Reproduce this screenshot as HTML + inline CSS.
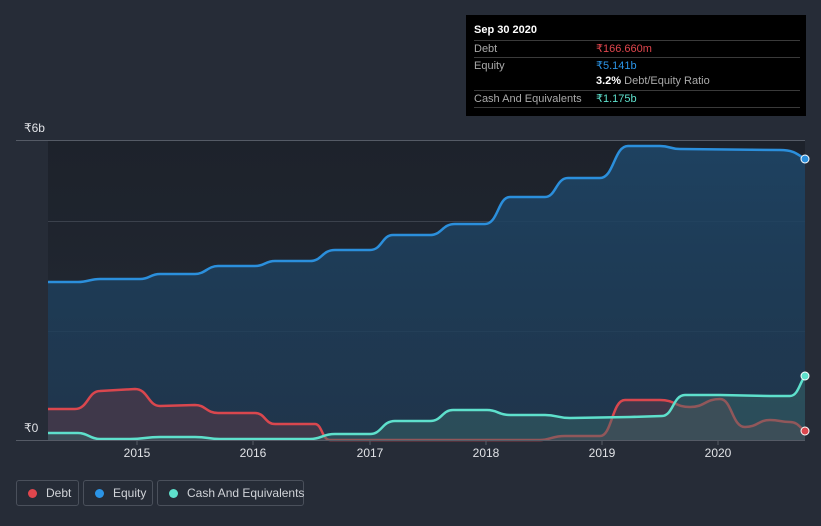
<!DOCTYPE html>
<html><head><style>
html,body{margin:0;width:821px;height:526px;overflow:hidden}
body{background:#262c37;font-family:"Liberation Sans",sans-serif;position:relative}
.tt{position:absolute;left:466px;top:15px;width:340px;height:101px;background:#000;color:#fff;font-size:11px}
.row{position:absolute;left:8px;width:326px;border-top:1px solid #3a3a3a;height:16px;line-height:16px;color:#aaa}
.lg{position:absolute;top:480px;height:26px;border:1px solid #4a505b;border-radius:3px;color:#d0d3d8;font-size:12px;line-height:24px;box-sizing:border-box;white-space:nowrap}
.dot{display:inline-block;width:9px;height:9px;border-radius:50%;margin:0 9px 0 11px;vertical-align:-1px}
</style></head><body>
<svg width="821" height="526" style="position:absolute;left:0;top:0">
<defs>
<linearGradient id="bg" x1="0" y1="0" x2="0" y2="1"><stop offset="0" stop-color="#1d222b"/><stop offset="1" stop-color="#232a35"/></linearGradient>
<linearGradient id="eq" x1="0" y1="0" x2="0" y2="1"><stop offset="0" stop-color="#1e4566" stop-opacity=".9"/><stop offset="1" stop-color="#1e3a55" stop-opacity=".7"/></linearGradient>
</defs>
<rect x="48" y="140" width="757" height="300" fill="url(#bg)"/>
<g stroke="#3b414c" stroke-width="1">
<line x1="16" y1="140.5" x2="805" y2="140.5" stroke="#555b66"/>
<line x1="48" y1="221.5" x2="805" y2="221.5"/>
<line x1="48" y1="331.5" x2="805" y2="331.5"/>
</g>
<path d="M48,282 L78,282 C88,282 90,279 100,279 L140,279 C150,279 150,274 160,274 L195,274 C205,274 208,266 218,266 L255,266 C265,266 265,261 275,261 L310,261 C322,261 322,250 335,250 L370,250 C382,250 382,235 393,235 L430,235 C442,235 442,224 455,224 L485,224 C498,224 498,197 510,197 L545,197 C556,197 556,178 568,178 L600,178 C614,178 614,146 628,146 L660,146 C670,146 670,149 680,149 L780,150 C795,150 798,155 805,159 L805,440 L48,440Z" fill="url(#eq)"/>
<path d="M48,282 L78,282 C88,282 90,279 100,279 L140,279 C150,279 150,274 160,274 L195,274 C205,274 208,266 218,266 L255,266 C265,266 265,261 275,261 L310,261 C322,261 322,250 335,250 L370,250 C382,250 382,235 393,235 L430,235 C442,235 442,224 455,224 L485,224 C498,224 498,197 510,197 L545,197 C556,197 556,178 568,178 L600,178 C614,178 614,146 628,146 L660,146 C670,146 670,149 680,149 L780,150 C795,150 798,155 805,159" fill="none" stroke="#2b8fdc" stroke-width="2.5"/>
<path d="M48,409 L75,409 C88,409 88,391 100,391 L135,389 C148,389 148,406 160,406 L195,405 C206,405 206,413 218,413 L255,413 C265,413 265,424 275,424 L315,424 C322,424 322,440 330,440 L540,440 C550,440 552,436 565,436 L600,436 C612,436 612,400 625,400 L660,400 C675,400 675,407 690,407 C705,407 705,399 720,399 C732,399 732,427 745,427 C758,427 758,420 770,420 C780,420 780,422 790,422 C798,422 800,428 805,431 L805,440 L48,440Z" fill="#5a3a48" fill-opacity=".55"/>
<path d="M48,409 L75,409 C88,409 88,391 100,391 L135,389 C148,389 148,406 160,406 L195,405 C206,405 206,413 218,413 L255,413 C265,413 265,424 275,424 L315,424 C322,424 322,440 330,440 L540,440 C550,440 552,436 565,436 L600,436 C612,436 612,400 625,400 L660,400 C675,400 675,407 690,407 C705,407 705,399 720,399 C732,399 732,427 745,427 C758,427 758,420 770,420 C780,420 780,422 790,422 C798,422 800,428 805,431" fill="none" stroke="#d9474e" stroke-width="2.5"/>
<path d="M48,433 L78,433 C88,433 90,439 100,439 L130,439 C145,439 145,437 160,437 L195,437 C208,437 208,439 220,439 L310,439 C322,439 322,434 335,434 L370,434 C382,434 382,421 395,421 L430,421 C442,421 442,410 453,410 L487,410 C498,410 498,415 510,415 L545,415 C557,415 557,418 570,418 L630,417 L662,416 C673,416 673,395 685,395 L720,395 L770,396 L790,396 C798,396 800,382 805,376 L805,440 L48,440Z" fill="#3a6a6a" fill-opacity=".45"/>
<path d="M48,433 L78,433 C88,433 90,439 100,439 L130,439 C145,439 145,437 160,437 L195,437 C208,437 208,439 220,439 L310,439 C322,439 322,434 335,434 L370,434 C382,434 382,421 395,421 L430,421 C442,421 442,410 453,410 L487,410 C498,410 498,415 510,415 L545,415 C557,415 557,418 570,418 L630,417 L662,416 C673,416 673,395 685,395 L720,395 L770,396 L790,396 C798,396 800,382 805,376" fill="none" stroke="#5ee0cc" stroke-width="2.5"/>
<line x1="16" y1="440.5" x2="805" y2="440.5" stroke="#555b66"/>
<g stroke="#555b66"><line x1="137" y1="440" x2="137" y2="445"/><line x1="253" y1="440" x2="253" y2="445"/><line x1="370" y1="440" x2="370" y2="445"/><line x1="486" y1="440" x2="486" y2="445"/><line x1="602" y1="440" x2="602" y2="445"/><line x1="718" y1="440" x2="718" y2="445"/></g>
<circle cx="805" cy="159" r="4" fill="#2b8fdc" stroke="#fff" stroke-width="1"/>
<circle cx="805" cy="431" r="4" fill="#d9474e" stroke="#fff" stroke-width="1"/>
<circle cx="805" cy="376" r="4" fill="#5ee0cc" stroke="#fff" stroke-width="1"/>
<g fill="#e0e2e6" font-size="12" font-family="Liberation Sans,sans-serif" text-anchor="middle">
<text x="137" y="457">2015</text><text x="253" y="457">2016</text><text x="370" y="457">2017</text><text x="486" y="457">2018</text><text x="602" y="457">2019</text><text x="718" y="457">2020</text>
</g>
<text x="24" y="132" fill="#e0e2e6" font-size="12" font-family="Liberation Sans,sans-serif">₹6b</text>
<text x="24" y="432" fill="#e0e2e6" font-size="12" font-family="Liberation Sans,sans-serif">₹0</text>
</svg>
<div class="tt">
<div style="position:absolute;left:8px;top:9px;font-weight:bold;font-size:11px">Sep 30 2020</div>
<div class="row" style="top:25px">Debt<span style="position:absolute;left:122px;color:#e0464d">₹166.660m</span></div>
<div class="row" style="top:42px">Equity<span style="position:absolute;left:122px;color:#2b94e6">₹5.141b</span></div>
<div style="position:absolute;left:130px;top:58px;color:#aaa;line-height:16px"><b style="color:#fff">3.2%</b> Debt/Equity Ratio</div>
<div class="row" style="top:75px;border-bottom:1px solid #3a3a3a">Cash And Equivalents<span style="position:absolute;left:122px;color:#5ee0cc">₹1.175b</span></div>
</div>
<div class="lg" style="left:16px;width:63px"><span class="dot" style="background:#e0464d"></span>Debt</div>
<div class="lg" style="left:83px;width:70px"><span class="dot" style="background:#2b94e6"></span>Equity</div>
<div class="lg" style="left:157px;width:147px"><span class="dot" style="background:#5ee0cc"></span>Cash And Equivalents</div>
</body></html>
